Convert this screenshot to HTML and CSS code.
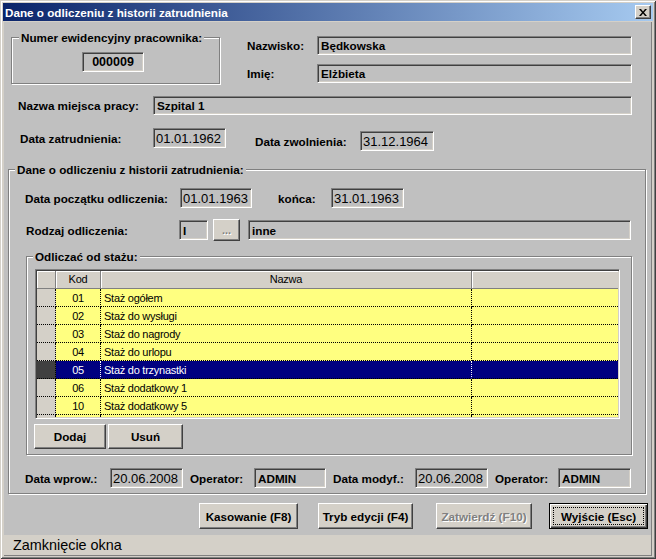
FILE: index.html
```html
<!DOCTYPE html>
<html lang="pl">
<head>
<meta charset="utf-8">
<title>Dane o odliczeniu z historii zatrudnienia</title>
<link rel="stylesheet" href="styles.css">
</head>
<body>
<div class="window">
  <div class="titlebar">
    <span class="title">Dane o odliczeniu z historii zatrudnienia</span>
    <button class="close" type="button" aria-label="Zamknij">
      <svg width="8" height="7" viewBox="0 0 8 7"><path d="M0 0h2l2 2.5L6 0h2L5 3.5 8 7H6L4 4.5 2 7H0l3-3.5z" fill="#000"/></svg>
    </button>
  </div>
  <div class="main">
    <div class="client">
      <div class="top">
        <div class="group g-numer">
          <div class="legend lg-numer">Numer ewidencyjny pracownika:</div>
          <div class="field f-numer">000009</div>
        </div>
        <div class="person">
          <div class="prow"><span class="label l-person">Nazwisko:</span><div class="field f-person">Będkowska</div></div>
          <div class="prow prow2"><span class="label l-person">Imię:</span><div class="field f-person">Elżbieta</div></div>
        </div>
      </div>

      <div class="row r-nazwa">
        <span class="label l-nazwa">Nazwa miejsca pracy:</span>
        <div class="field f-nazwa">Szpital 1</div>
      </div>

      <div class="row r-dates">
        <span class="label l-zatr">Data zatrudnienia:</span>
        <div class="field date f-zatr">01.01.1962</div>
        <span class="label l-zwol">Data zwolnienia:</span>
        <div class="field date f-zwol">31.12.1964</div>
      </div>

      <div class="group g-odl">
        <div class="legend lg-odl">Dane o odliczeniu z historii zatrudnienia:</div>

        <div class="row r-pocz">
          <span class="label l-pocz">Data początku odliczenia:</span>
          <div class="field date f-pocz">01.01.1963</div>
          <span class="label l-konca">końca:</span>
          <div class="field date f-konca">31.01.1963</div>
        </div>

        <div class="row r-rodzaj">
          <span class="label l-rodzaj">Rodzaj odliczenia:</span>
          <div class="field f-kod">I</div>
          <button class="btn btn-dots" type="button" disabled>...</button>
          <div class="field f-inne">inne</div>
        </div>

        <div class="group g-staz">
          <div class="legend lg-staz">Odliczać od stażu:</div>
          <div class="grid">
            <div class="grid-head">
              <div class="hc"></div>
              <div class="hc">Kod</div>
              <div class="hc">Nazwa</div>
              <div class="hc hc-last"></div>
            </div>
            <div class="grid-body">
              <div class="grow"><div class="ind"></div><div class="c kod">01</div><div class="c">Staż ogółem</div><div class="c last"></div></div>
              <div class="grow"><div class="ind"></div><div class="c kod">02</div><div class="c">Staż do wysługi</div><div class="c last"></div></div>
              <div class="grow"><div class="ind"></div><div class="c kod">03</div><div class="c">Staż do nagrody</div><div class="c last"></div></div>
              <div class="grow"><div class="ind"></div><div class="c kod">04</div><div class="c">Staż do urlopu</div><div class="c last"></div></div>
              <div class="grow sel"><div class="ind"></div><div class="c kod">05</div><div class="c">Staż do trzynastki</div><div class="c last"></div></div>
              <div class="grow"><div class="ind"></div><div class="c kod">06</div><div class="c">Staż dodatkowy 1</div><div class="c last"></div></div>
              <div class="grow"><div class="ind"></div><div class="c kod">10</div><div class="c">Staż dodatkowy 5</div><div class="c last"></div></div>
              <div class="grow"><div class="ind"></div><div class="c kod"></div><div class="c"></div><div class="c last"></div></div>
            </div>
          </div>
          <div class="gbtns">
            <button class="btn b-dodaj" type="button">Dodaj</button>
            <button class="btn b-usun" type="button">Usuń</button>
          </div>
        </div>

        <div class="row r-bottom">
          <span class="label l-wprow">Data wprow.:</span>
          <div class="field date f-d1">20.06.2008</div>
          <span class="label l-op1">Operator:</span>
          <div class="field f-op1">ADMIN</div>
          <span class="label l-modyf">Data modyf.:</span>
          <div class="field date f-d2">20.06.2008</div>
          <span class="label l-op2">Operator:</span>
          <div class="field f-op2">ADMIN</div>
        </div>
      </div>

      <div class="actions">
        <button class="btn a-kas" type="button">Kasowanie (F8)</button>
        <button class="btn a-tryb" type="button">Tryb edycji (F4)</button>
        <button class="btn a-zatw" type="button" disabled>Zatwierdź (F10)</button>
        <button class="btn a-wyj b-default" type="button"><span class="focus">Wyjście (Esc)</span></button>
      </div>
    </div>
    <div class="status">Zamknięcie okna</div>
  </div>
</div>
</body>
</html>
```

FILE: styles.css
```css
* { box-sizing: border-box; }
html, body { margin: 0; padding: 0; }
body {
  width: 656px;
  height: 559px;
  overflow: hidden;
  background: #d4d0c8;
  font-family: "Liberation Sans", Arial, sans-serif;
  color: #000;
}

/* ---------- window frame ---------- */
.window {
  width: 656px;
  height: 559px;
  padding: 3px;
  background: #d4d0c8;
  box-shadow: inset 1px 1px #d4d0c8, inset -1px -1px #404040, inset 2px 2px #fff, inset -2px -2px #808080;
  display: flex;
  flex-direction: column;
}
.titlebar {
  flex: none;
  height: 18px;
  margin-bottom: 1px;
  padding: 0 2px 0 2px;
  background: linear-gradient(to right, #0a246a, #a6caf0);
  display: flex;
  align-items: center;
  justify-content: space-between;
}
.title {
  color: #fff;
  font-weight: bold;
  font-size: 11.7px;
  line-height: 13px;
  white-space: nowrap;
}
.close {
  width: 16px;
  height: 14px;
  padding: 0;
  background: #d4d0c8;
  border: 1px solid;
  border-color: #fff #404040 #404040 #fff;
  box-shadow: inset -1px -1px #808080;
  display: flex;
  align-items: center;
  justify-content: center;
}
.close svg { display: block; }

.main {
  flex: 1;
  display: flex;
  flex-direction: column;
  margin: 0 1px;
  border-right: 1px solid #808080;
}
.client {
  flex: 1;
  background: #c0c0c0;
  display: flex;
  flex-direction: column;
}
.status {
  flex: none;
  height: 21px;
  background: #d4d0c8;
  border-bottom: 1px solid #808080;
  padding-left: 9px;
  font-size: 14.4px;
  line-height: 20px;
  white-space: nowrap;
}

/* ---------- common controls ---------- */
.label {
  flex: none;
  font-weight: bold;
  font-size: 11.7px;
  white-space: nowrap;
}
.field {
  flex: none;
  height: 20px;
  background: #c0c0c0;
  border: 1px solid;
  border-color: #808080 #fff #fff #808080;
  box-shadow: inset 1px 1px #404040, inset -1px -1px #d4d0c8;
  padding: 0 0 0 3px;
  display: flex;
  align-items: center;
  font-weight: bold;
  font-size: 11.7px;
  white-space: nowrap;
  overflow: hidden;
}
.field.date {
  font-weight: normal;
  font-size: 13px;
  padding-left: 2px;
}
.group {
  flex: none;
  border: 1px solid #808080;
  box-shadow: inset 1px 1px #fff, 1px 1px #fff;
}
.legend {
  width: max-content;
  margin-top: -7px;
  padding: 0 2px;
  background: #c0c0c0;
  font-weight: bold;
  font-size: 11.7px;
  line-height: 13px;
  white-space: nowrap;
}
.row {
  flex: none;
  display: flex;
  align-items: center;
}
.btn {
  flex: none;
  padding: 0;
  margin: 0;
  background: #d4d0c8;
  border: 1px solid;
  border-color: #fff #404040 #404040 #fff;
  box-shadow: inset -1px -1px #808080;
  font-family: "Liberation Sans", Arial, sans-serif;
  font-weight: bold;
  font-size: 11.7px;
  color: #000;
  display: flex;
  align-items: center;
  justify-content: center;
  white-space: nowrap;
}
.btn:disabled {
  color: #808080;
  text-shadow: 1px 1px #fff;
}

/* ---------- top section ---------- */
.top {
  flex: none;
  height: 62px;
  display: flex;
  align-items: flex-start;
}
.g-numer {
  margin: 15px 0 0 7px;
  width: 209px;
  height: 47px;
}
.lg-numer { margin-left: 7px; }
.f-numer {
  width: 62px;
  margin: 8px 0 0 70px;
  padding: 0;
  justify-content: center;
  font-size: 12.5px;
}
.person { margin: 14px 0 0 27px; }
.prow {
  display: flex;
  align-items: center;
  height: 19px;
}
.prow2 { margin-top: 9px; }
.l-person { width: 70px; }
.f-person { width: 315px; height: 19px; }

.r-nazwa {
  margin-top: 12px;
  height: 19px;
  padding-left: 14px;
}
.l-nazwa { width: 135px; }
.f-nazwa { width: 479px; height: 19px; }

.r-dates {
  margin-top: 13px;
  height: 23px;
  padding-left: 16px;
  align-items: flex-start;
}
.r-dates .label { height: 20px; display: flex; align-items: center; }
.l-zatr { width: 133px; }
.f-zatr { width: 73px; }
.l-zwol { width: 105px; margin: 3px 0 0 29px; }
.f-zwol { width: 74px; margin-top: 3px; }

/* ---------- group: dane o odliczeniu ---------- */
.g-odl {
  margin: 18px 0 0 4px;
  width: 638px;
  height: 325px;
}
.lg-odl { margin-left: 6px; }

.r-pocz {
  margin-top: 12px;
  height: 20px;
  padding-left: 16px;
}
.l-pocz { width: 155px; }
.f-pocz { width: 72px; }
.l-konca { width: 53px; margin-left: 26px; }
.f-konca { width: 73px; }

.r-rodzaj {
  margin-top: 11px;
  height: 22px;
  padding-left: 17px;
}
.l-rodzaj { width: 153px; }
.f-kod { width: 29px; }
.btn-dots {
  width: 27px;
  height: 22px;
  margin-left: 5px;
  font-size: 11px;
}
.f-inne { width: 383px; margin-left: 8px; }

/* ---------- group: odliczać od stażu ---------- */
.g-staz {
  margin: 15px 0 0 17px;
  width: 606px;
  height: 199px;
}
.lg-staz { margin-left: 6px; }

.grid {
  margin: 6px 0 0 8px;
  width: 585px;
  height: 150px;
  padding: 1px;
  border: 1px solid;
  border-color: #808080 #fff #fff #808080;
  box-shadow: inset 1px 1px #404040, inset -1px -1px #d4d0c8;
  background: #c0c0c0;
  font-size: 11px;
  letter-spacing: -0.25px;
}
.grid-head,
.grow {
  display: grid;
  grid-template-columns: 19px 45px 371px 146px;
}
.grid-head {
  height: 18px;
  border-bottom: 1px solid #808080;
}
.hc {
  background: #d4d0c8;
  border-right: 1px solid #808080;
  box-shadow: inset 1px 1px #fff;
  display: flex;
  align-items: center;
  justify-content: center;
  line-height: 17px;
}
.hc-last { border-right: 0; }
.grid-body {
  height: 128px;
  overflow: hidden;
}
.grow { height: 18px; }
.ind {
  background: #d4d0c8;
  border-right: 1px dotted #000;
  border-bottom: 1px dotted #000;
}
.c {
  background: #ffff80;
  border-right: 1px dotted #000;
  border-bottom: 1px dotted #000;
  padding-left: 3px;
  display: flex;
  align-items: center;
  white-space: nowrap;
  overflow: hidden;
}
.c.kod { justify-content: center; padding-left: 0; }
.c.last { border-right: 0; }
.sel .c {
  background: #000080;
  color: #fff;
  border-right-color: #fff;
}
.sel .c.last { border-right: 0; }
.sel .ind { background: #404040; }

.gbtns {
  display: flex;
  margin: 5px 0 0 7px;
  height: 25px;
}
.b-dodaj { width: 72px; height: 25px; }
.b-usun { width: 75px; height: 25px; margin-left: 2px; }

/* ---------- bottom row ---------- */
.r-bottom {
  margin-top: 13px;
  height: 20px;
  padding-left: 16px;
}
.l-wprow { width: 85px; }
.f-d1 { width: 73px; }
.l-op1 { width: 64px; margin-left: 7px; }
.f-op1 { width: 72px; }
.l-modyf { width: 82px; margin-left: 7px; }
.f-d2 { width: 73px; }
.l-op2 { width: 63px; margin-left: 7px; }
.f-op2 { width: 73px; }

/* ---------- action buttons ---------- */
.actions {
  flex: none;
  display: flex;
  margin-top: 9px;
  height: 26px;
}
.actions .btn { height: 26px; }
.a-kas { width: 99px; margin-left: 195px; }
.a-tryb { width: 95px; margin-left: 20px; }
.a-zatw { width: 96px; margin-left: 23px; }
.a-wyj { width: 99px; margin-left: 17px; }
.b-default {
  border: 1px solid #000;
  box-shadow: inset 1px 1px #fff, inset -1px -1px #404040, inset -2px -2px #808080;
}
.focus {
  width: calc(100% - 6px);
  height: calc(100% - 6px);
  border: 1px dotted #000;
  display: flex;
  align-items: center;
  justify-content: center;
}
```
